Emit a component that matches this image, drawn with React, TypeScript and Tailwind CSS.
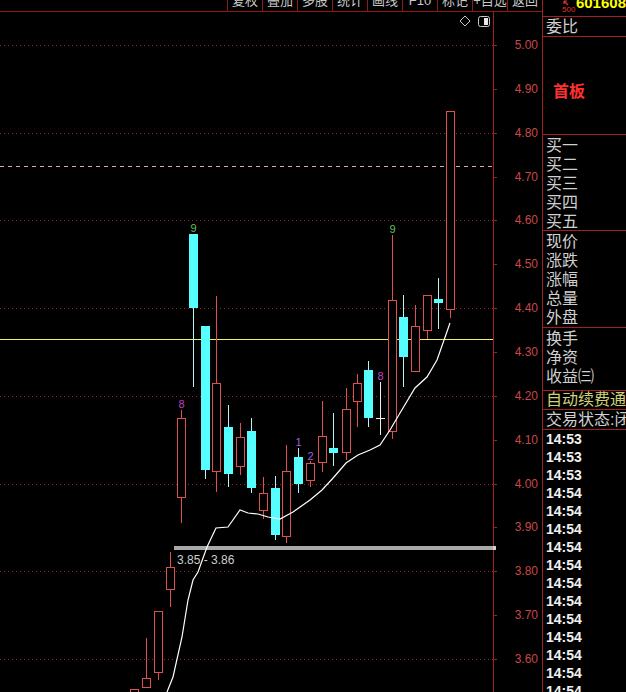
import React from 'react';

type Candle = {
  x: number;
  top: number;
  bot: number;
  hi: number;
  lo: number;
  kind: 'up' | 'down' | 'doji';
  label?: { text: string; color: string };
};

const RED = '#e05050';
const CYAN = '#55ffff';
const CYAN_WICK = '#b8f4f4';
const LINE = '#a02020';

const candles: Candle[] = [
  { x: 130, top: 689, bot: 700, hi: 689, lo: 700, kind: 'up' },
  { x: 142, top: 678, bot: 687, hi: 638, lo: 687, kind: 'up' },
  { x: 154, top: 611, bot: 672, hi: 611, lo: 680, kind: 'up' },
  { x: 166, top: 567, bot: 589, hi: 552, lo: 607, kind: 'up' },
  { x: 177, top: 418, bot: 497, hi: 410, lo: 523, kind: 'up', label: { text: '8', color: '#c040c0' } },
  { x: 189, top: 234, bot: 308, hi: 234, lo: 387, kind: 'down', label: { text: '9', color: '#60c060' } },
  { x: 201, top: 326, bot: 470, hi: 326, lo: 479, kind: 'down' },
  { x: 212, top: 383, bot: 471, hi: 296, lo: 492, kind: 'up' },
  { x: 224, top: 427, bot: 474, hi: 405, lo: 487, kind: 'down' },
  { x: 236, top: 437, bot: 466, hi: 423, lo: 475, kind: 'up' },
  { x: 247, top: 431, bot: 488, hi: 418, lo: 493, kind: 'down' },
  { x: 259, top: 493, bot: 510, hi: 477, lo: 519, kind: 'up' },
  { x: 271, top: 488, bot: 535, hi: 476, lo: 540, kind: 'down' },
  { x: 282, top: 471, bot: 536, hi: 445, lo: 543, kind: 'up' },
  { x: 294, top: 457, bot: 484, hi: 448, lo: 493, kind: 'down', label: { text: '1', color: '#a060d8' } },
  { x: 306, top: 463, bot: 480, hi: 461, lo: 487, kind: 'up', label: { text: '2', color: '#a060d8' } },
  { x: 318, top: 436, bot: 462, hi: 401, lo: 472, kind: 'up' },
  { x: 329, top: 448, bot: 453, hi: 413, lo: 466, kind: 'down' },
  { x: 342, top: 409, bot: 452, hi: 388, lo: 460, kind: 'up' },
  { x: 353, top: 383, bot: 401, hi: 374, lo: 427, kind: 'up' },
  { x: 364, top: 370, bot: 418, hi: 361, lo: 427, kind: 'down' },
  { x: 376, top: 418, bot: 418, hi: 382, lo: 435, kind: 'doji', label: { text: '8', color: '#c040c0' } },
  { x: 388, top: 300, bot: 431, hi: 235, lo: 439, kind: 'up', label: { text: '9', color: '#60c060' } },
  { x: 399, top: 317, bot: 357, hi: 295, lo: 387, kind: 'down' },
  { x: 411, top: 326, bot: 371, hi: 305, lo: 371, kind: 'up' },
  { x: 423, top: 295, bot: 330, hi: 295, lo: 339, kind: 'up' },
  { x: 434, top: 299, bot: 303, hi: 278, lo: 329, kind: 'down' },
  { x: 446, top: 111, bot: 309, hi: 111, lo: 318, kind: 'up' },
];

const ma = [
  [167, 692], [173, 677], [182, 637], [188, 600], [193, 580], [198, 572], [207, 547],
  [216, 528], [228, 527], [240, 510], [248, 513], [258, 514], [268, 517], [280, 519],
  [293, 512], [310, 500], [322, 490], [334, 477], [346, 463], [358, 455], [370, 450],
  [380, 445], [390, 430], [400, 413], [415, 388], [427, 377], [437, 360], [443, 343], [450, 323],
];

const toY = (p: number) => 45 + (5 - p) * 438.6;
const prices = Array.from({ length: 15 }, (_, i) => 5 - i * 0.1);
const grid = [5, 4.8, 4.6, 4.4, 4.2, 4, 3.8, 3.6];

const tools = ['复权', '叠加', '多股', '统计', '画线', 'F10', '标记', '+自选', '返回'];
const buys = ['买一', '买二', '买三', '买四', '买五'];
const quotes = ['现价', '涨跌', '涨幅', '总量', '外盘'];
const extra = ['换手', '净资', '收益㈢'];
const times = [
  '14:53', '14:53', '14:53',
  '14:54', '14:54', '14:54', '14:54', '14:54', '14:54',
  '14:54', '14:54', '14:54', '14:54', '14:54', '14:54',
];

function Chart() {
  return (
    <svg width={542} height={680} viewBox="0 12 542 680" className="block shrink-0">
      {grid.map(p => (
        <line key={p} x1={0} x2={493} y1={Math.round(toY(p)) + 0.5} y2={Math.round(toY(p)) + 0.5}
          stroke="#8a2a2a" strokeDasharray="1 3" />
      ))}
      <line x1={0} x2={493} y1={166.5} y2={166.5} stroke="#e0a8a8" strokeDasharray="4 4" />
      <line x1={0} x2={493} y1={339.5} y2={339.5} stroke="#f0f060" />

      {/* top-right icons */}
      <path d="M465 16 L470 21 L465 26 L460 21 Z" fill="none" stroke="#c8c8c8" />
      <rect x={478.5} y={16.5} width={11} height={10} rx={2} fill="none" stroke="#c8c8c8" />
      <rect x={484} y={18} width={4} height={7} fill="#e8e8e8" />

      {/* support bar */}
      <rect x={174} y={546} width={319} height={4} fill="#a8a8a8" />
      <text x={177} y={560} fontSize={12} fill="#cfcfcf" dominantBaseline="central"
        fontFamily="'Liberation Sans', Arial, sans-serif">3.85 - 3.86</text>

      {candles.map((c, i) => {
        const cx = c.x + 4.5;
        return (
          <g key={i}>
            {c.kind === 'down' && (
              <>
                <line x1={cx} x2={cx} y1={c.hi} y2={c.lo} stroke={CYAN_WICK} />
                <rect x={c.x} y={c.top} width={9} height={Math.max(c.bot - c.top, 3)} fill={CYAN} />
              </>
            )}
            {c.kind === 'up' && (
              <>
                <line x1={cx} x2={cx} y1={c.hi} y2={c.lo} stroke={RED} />
                <rect x={c.x + 0.5} y={c.top + 0.5} width={8} height={c.bot - c.top} fill="#000" stroke={RED} />
              </>
            )}
            {c.kind === 'doji' && (
              <>
                <line x1={cx} x2={cx} y1={c.hi} y2={c.lo} stroke="#f0f0f0" />
                <line x1={c.x} x2={c.x + 9} y1={c.top + 0.5} y2={c.top + 0.5} stroke="#f0f0f0" />
              </>
            )}
            {c.label && (
              <text x={cx} y={c.label.text === '2' ? 456 : c.hi - 6} fontSize={11} fill={c.label.color}
                textAnchor="middle" dominantBaseline="central"
                fontFamily="'Liberation Sans', Arial, sans-serif">{c.label.text}</text>
            )}
          </g>
        );
      })}

      <polyline points={ma.map(p => p.join(',')).join(' ')} fill="none" stroke="#ffffff" strokeWidth={1.2} />

      {/* price axis */}
      <line x1={493.5} x2={493.5} y1={12} y2={692} stroke={LINE} />
      <rect x={493} y={546} width={3} height={4} fill="#d0d0d0" />
      {prices.map(p => (
        <g key={p.toFixed(2)}>
          <line x1={493} x2={497} y1={Math.round(toY(p)) + 0.5} y2={Math.round(toY(p)) + 0.5} stroke={LINE} />
          <text x={538} y={toY(p)} fontSize={12} fill="#c84848" textAnchor="end" dominantBaseline="central"
            fontFamily="'Liberation Sans', Arial, sans-serif">{p.toFixed(2)}</text>
        </g>
      ))}
    </svg>
  );
}

function Rows({ items }: { items: string[] }) {
  return (
    <>
      {items.map(t => (
        <div key={t} className="h-[19px] shrink-0 leading-[19px] pl-[3px] text-[16px] text-[#d0d0d0] whitespace-nowrap">{t}</div>
      ))}
    </>
  );
}

export default function App() {
  return (
    <div className="w-[626px] h-[692px] bg-black flex overflow-hidden font-['Liberation_Sans','Noto_Sans_CJK_SC',sans-serif]">
      <div className="w-[542px] flex flex-col shrink-0">
        <div className="h-[12px] shrink-0 border-b border-[#8c1c1c] flex justify-end overflow-hidden">
          {tools.map(t => (
            <div key={t} className="w-[35px] border-l border-[#8c1c1c] flex justify-center">
              <span className="-mt-[6px] text-[13px] leading-[13px] text-[#c8c8c8] whitespace-nowrap">{t}</span>
            </div>
          ))}
        </div>
        <Chart />
      </div>

      <div className="flex-1 border-l border-[#a02020] flex flex-col overflow-hidden">
        <div className="h-[17px] shrink-0 border-b border-[#a02020] flex overflow-hidden">
          <div className="ml-[19px] w-[15px] flex flex-col">
            <svg width={6} height={6} viewBox="0 0 6 6" className="ml-[1px]">
              <path d="M1 1 L5 5 M1 1 L1 4 M1 1 L4 1" stroke="#e03030" strokeWidth={1.2} fill="none" />
            </svg>
            <span className="text-[8px] leading-[8px] text-[#e03030]">500</span>
          </div>
          <span className="ml-auto -mt-[5px] text-[15px] leading-[15px] font-bold text-[#ffff00]">601608</span>
        </div>
        <div className="h-[20px] shrink-0 border-b border-[#a02020] leading-[19px] pl-[3px] text-[16px] text-[#d0d0d0]">委比</div>
        <div className="h-[98px] shrink-0 border-b border-[#a02020] pt-[43px] pl-[10px]">
          <span className="text-[16px] leading-[18px] font-bold text-[#ff3030]">首板</span>
        </div>
        <div className="h-[96px] shrink-0 border-b border-[#a02020] pt-[1px]">
          <Rows items={buys} />
        </div>
        <div className="h-[97px] shrink-0 border-b border-[#a02020] pt-[1px]">
          <Rows items={quotes} />
        </div>
        <div className="h-[63px] shrink-0 border-b border-[#a02020] pt-[1px]">
          <Rows items={extra} />
        </div>
        <div className="h-[19px] shrink-0 border-b border-[#a02020] leading-[18px] pl-[3px] text-[16px] text-[#d0d078] whitespace-nowrap">自动续费通知</div>
        <div className="h-[20px] shrink-0 border-b border-[#a02020] leading-[19px] pl-[3px] text-[16px] text-[#d0d0d0] whitespace-nowrap">交易状态:闭市</div>
        <div className="flex flex-col">
          {times.map((t, i) => (
            <div key={i} className="h-[18px] shrink-0 leading-[18px] pl-[3px] text-[14px] font-bold text-[#f0f0f0]">{t}</div>
          ))}
        </div>
      </div>
    </div>
  );
}
